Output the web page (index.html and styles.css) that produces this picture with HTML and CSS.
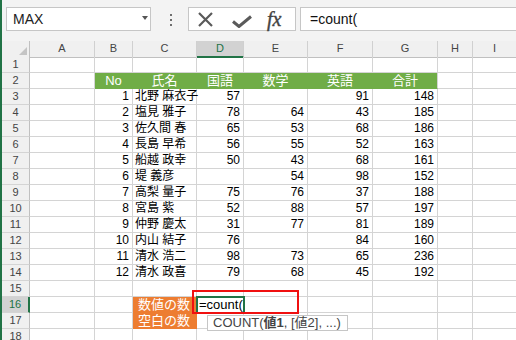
FILE: index.html
```html
<!DOCTYPE html>
<html lang="ja">
<head>
    <meta charset="UTF-8">
    <title>COUNT</title>
    <link rel="stylesheet" href="styles.css">
</head>
<body>
    <div class="app">
        <!-- Formula bar -->
        <div class="toolbar">
            <div class="namebox">MAX<span class="caret"></span></div>
            <div class="grip"><i></i><i></i><i></i></div>
            <div class="fbtns">
                <svg class="ic-x" width="17" height="15" viewBox="0 0 17 15"><path d="M2 1 L15 14 M15 1 L2 14" stroke="#5a5a5a" stroke-width="2.2" fill="none"/></svg>
                <svg class="ic-ok" width="20" height="13" viewBox="0 0 20 13"><path d="M1 6.5 L7 11.5 L19 1.5" stroke="#5a5a5a" stroke-width="3" fill="none"/></svg>
                <span class="fx">fx</span>
            </div>
            <div class="finput">=count(</div>
        </div>

        <!-- Sheet -->
        <div class="sheet">
            <div class="row colhead"><div class="corner"><span class="tri"></span></div><div>A</div><div>B</div><div>C</div><div class="sel">D</div><div>E</div><div>F</div><div>G</div><div>H</div><div>I</div></div>
            <div class="row"><div class="rh">1</div><div></div><div></div><div></div><div></div><div></div><div></div><div></div><div></div><div></div></div>
            <div class="row"><div class="rh">2</div><div></div><div class="hd">No</div><div class="hd">氏名</div><div class="hd">国語</div><div class="hd">数学</div><div class="hd">英語</div><div class="hd end">合計</div><div></div><div></div></div>
            <div class="row"><div class="rh">3</div><div></div><div class="n">1</div><div class="t">北野 麻衣子</div><div class="n">57</div><div class="n"></div><div class="n">91</div><div class="n">148</div><div></div><div></div></div>
            <div class="row"><div class="rh">4</div><div></div><div class="n">2</div><div class="t">塩見 雅子</div><div class="n">78</div><div class="n">64</div><div class="n">43</div><div class="n">185</div><div></div><div></div></div>
            <div class="row"><div class="rh">5</div><div></div><div class="n">3</div><div class="t">佐久間 春</div><div class="n">65</div><div class="n">53</div><div class="n">68</div><div class="n">186</div><div></div><div></div></div>
            <div class="row"><div class="rh">6</div><div></div><div class="n">4</div><div class="t">長島 早希</div><div class="n">56</div><div class="n">55</div><div class="n">52</div><div class="n">163</div><div></div><div></div></div>
            <div class="row"><div class="rh">7</div><div></div><div class="n">5</div><div class="t">船越 政幸</div><div class="n">50</div><div class="n">43</div><div class="n">68</div><div class="n">161</div><div></div><div></div></div>
            <div class="row"><div class="rh">8</div><div></div><div class="n">6</div><div class="t">堤 義彦</div><div class="n"></div><div class="n">54</div><div class="n">98</div><div class="n">152</div><div></div><div></div></div>
            <div class="row"><div class="rh">9</div><div></div><div class="n">7</div><div class="t">高梨 量子</div><div class="n">75</div><div class="n">76</div><div class="n">37</div><div class="n">188</div><div></div><div></div></div>
            <div class="row"><div class="rh">10</div><div></div><div class="n">8</div><div class="t">宮島 紫</div><div class="n">52</div><div class="n">88</div><div class="n">57</div><div class="n">197</div><div></div><div></div></div>
            <div class="row"><div class="rh">11</div><div></div><div class="n">9</div><div class="t">仲野 慶太</div><div class="n">31</div><div class="n">77</div><div class="n">81</div><div class="n">189</div><div></div><div></div></div>
            <div class="row"><div class="rh">12</div><div></div><div class="n">10</div><div class="t">内山 結子</div><div class="n">76</div><div class="n"></div><div class="n">84</div><div class="n">160</div><div></div><div></div></div>
            <div class="row"><div class="rh">13</div><div></div><div class="n">11</div><div class="t">清水 浩二</div><div class="n">98</div><div class="n">73</div><div class="n">65</div><div class="n">236</div><div></div><div></div></div>
            <div class="row"><div class="rh">14</div><div></div><div class="n">12</div><div class="t">清水 政喜</div><div class="n">79</div><div class="n">68</div><div class="n">45</div><div class="n">192</div><div></div><div></div></div>
            <div class="row"><div class="rh">15</div><div></div><div></div><div></div><div></div><div></div><div></div><div></div><div></div><div></div></div>
            <div class="row"><div class="rh sel">16</div><div></div><div></div><div class="or">数値の数</div><div class="active">=count(</div><div></div><div></div><div></div><div></div><div></div></div>
            <div class="row"><div class="rh">17</div><div></div><div></div><div class="or">空白の数</div><div></div><div></div><div></div><div></div><div></div><div></div></div>
            <div class="row"><div class="rh">18</div><div></div><div></div><div></div><div></div><div></div><div></div><div></div><div></div><div></div></div>
        </div>
    </div>

    <!-- annotation + function hint -->
    <div class="mark"></div>
    <div class="tip">COUNT(<b>値1</b>, [値2], ...)</div>
</body>
</html>
```

FILE: styles.css
```css
body {
    margin: 0;
    height: 340px;
    overflow: hidden;
    position: relative;
    background-color: #FFFFFF;
    font-family: "Liberation Sans", "Noto Sans CJK JP", sans-serif;
}
.app {
    border-left: 2px solid #217346;
    height: 340px;
    box-sizing: border-box;
}

/* formula bar */
.toolbar {
    display: flex;
    align-items: flex-start;
    height: 41px;
    box-sizing: border-box;
    padding: 7px 0 0 4px;
    background-color: #F3F3F3;
}
.namebox {
    width: 145px;
    height: 24px;
    box-sizing: border-box;
    border: 1px solid #C6C6C6;
    background-color: #FFFFFF;
    display: flex;
    align-items: center;
    justify-content: space-between;
    padding: 0 2px 0 6px;
    font-size: 14px;
    color: #222222;
}
.caret {
    width: 0;
    height: 0;
    border-left: 3px solid transparent;
    border-right: 3px solid transparent;
    border-top: 4px solid #555555;
    margin-bottom: 3px;
}
.grip {
    width: 37px;
    box-sizing: border-box;
    padding: 7px 0 0 19px;
    display: flex;
    flex-direction: column;
    gap: 3px;
}
.grip i {
    width: 2px;
    height: 2px;
    background-color: #6E6E6E;
}
.fbtns {
    width: 108px;
    height: 24px;
    box-sizing: border-box;
    border: 1px solid #C6C6C6;
    background-color: #FFFFFF;
    display: flex;
    align-items: center;
}
.ic-x {
    margin-left: 8px;
}
.ic-ok {
    margin-left: 18px;
    margin-top: 4px;
}
.fx {
    margin-left: 15px;
    font-family: "Liberation Serif", serif;
    font-style: italic;
    font-size: 20px;
    color: #444444;
    line-height: 22px;
    -webkit-text-stroke: 0.4px #444444;
}
.finput {
    flex: 1;
    margin-left: 4px;
    height: 24px;
    box-sizing: border-box;
    border: 1px solid #C6C6C6;
    border-right: none;
    background-color: #FFFFFF;
    padding-left: 9px;
    font-size: 14px;
    line-height: 22px;
    color: #111111;
}

/* sheet grid */
.row {
    display: grid;
    grid-template-columns: 28px 65px 38px 64px 47px 64px 65px 65px 35px 43px;
    height: 16px;
}
.row > div {
    box-sizing: border-box;
    border-right: 1px solid #D4D4D4;
    border-bottom: 1px solid #D4D4D4;
    font-size: 12px;
    line-height: 15px;
    white-space: nowrap;
    padding: 0 3px;
    color: #000000;
}
.row > div:last-child {
    border-right: none;
}
.colhead > div {
    background-color: #F0F0F0;
    border-right-color: #D0D0D0;
    border-bottom-color: #C0C0C0;
    text-align: center;
    font-size: 11px;
    color: #444444;
}
.colhead .corner {
    display: flex;
    justify-content: flex-end;
    align-items: flex-end;
    padding: 0 2px 2px 0;
    border-right-color: #C0C0C0;
}
.tri {
    width: 0;
    height: 0;
    border-left: 8px solid transparent;
    border-bottom: 8px solid #C4C4C4;
}
.colhead .sel {
    background-color: #D2D2D2;
    color: #217346;
    border-bottom: 2px solid #217346;
}
.row .rh {
    background-color: #F0F0F0;
    border-right-color: #C0C0C0;
    text-align: center;
    font-size: 11px;
    color: #444444;
}
.row .rh.sel {
    background-color: #D2D2D2;
    color: #217346;
    border-right: 2px solid #217346;
}
.n {
    text-align: right;
}
.t {
    padding-left: 2px !important;
}
.row .hd {
    background-color: #70AD47;
    border-color: #70AD47;
    color: #FFFFFF;
    text-align: center;
    font-size: 13px;
}
.row .hd.end {
    border-right-color: #D4D4D4;
}
.row .or {
    background-color: #ED7D31;
    border-color: #ED7D31;
    color: #FFFFFF;
    font-size: 13px;
    padding-left: 5px;
}
.row .active {
    outline: 2px solid #217346;
    outline-offset: -1px;
    position: relative;
    z-index: 1;
    font-size: 13px;
    padding-left: 2px;
}

/* overlays */
.mark {
    position: absolute;
    left: 192px;
    top: 290px;
    width: 107px;
    height: 24px;
    box-sizing: border-box;
    border: 2px solid #F01010;
    z-index: 2;
}
.tip {
    position: absolute;
    left: 207px;
    top: 315px;
    width: 141px;
    height: 16px;
    box-sizing: border-box;
    border: 1px solid #C6C6C6;
    background-color: #FFFFFF;
    padding-left: 5px;
    font-size: 13px;
    line-height: 14px;
    color: #444444;
    white-space: nowrap;
    z-index: 3;
}
```
